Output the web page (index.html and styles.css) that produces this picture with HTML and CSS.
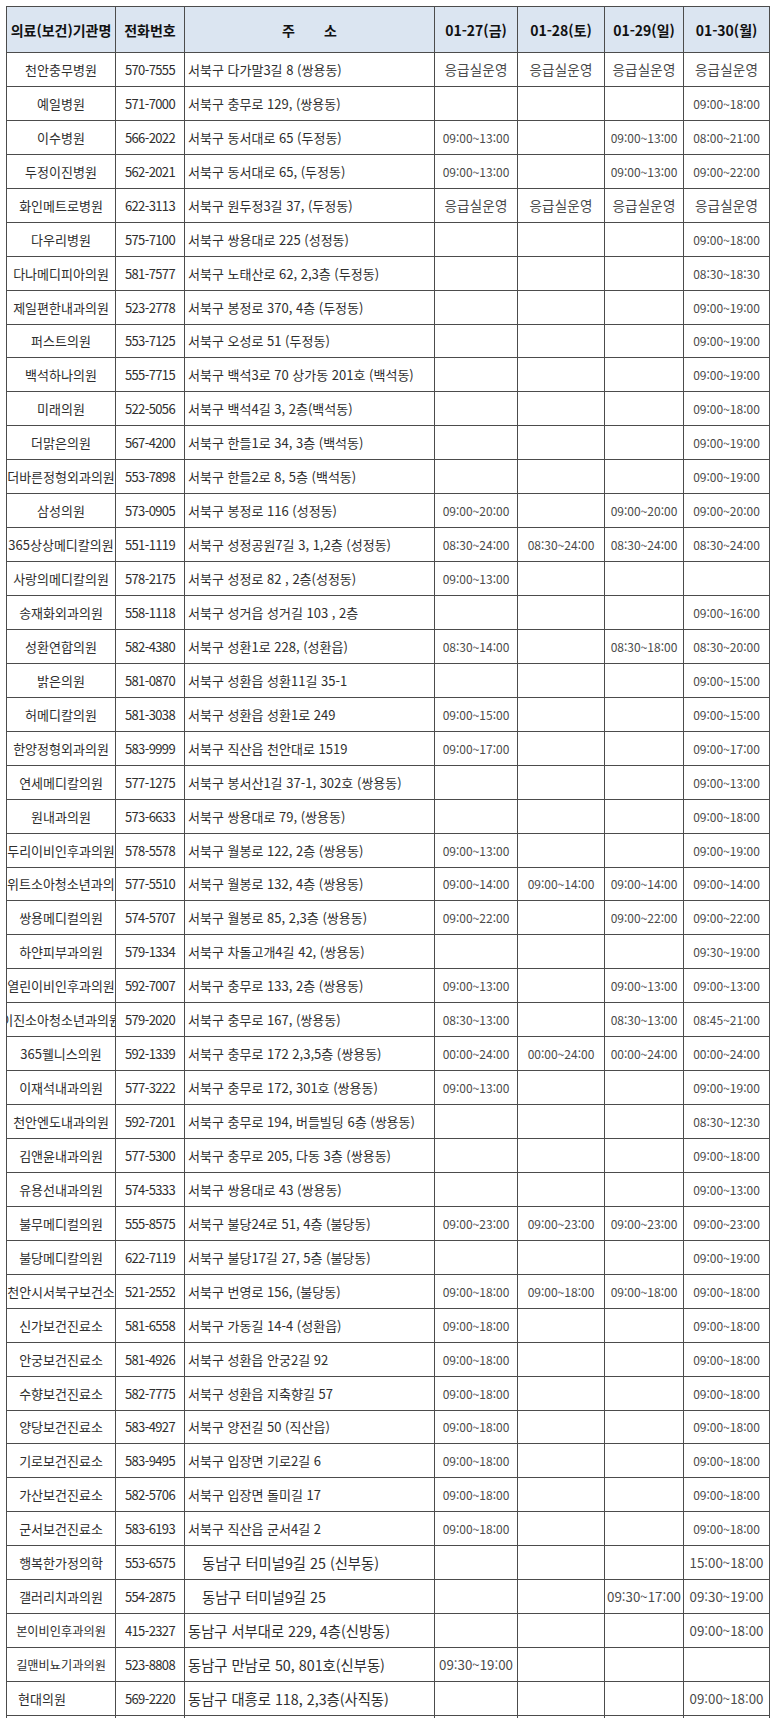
FILE: index.html
```html
<!DOCTYPE html>
<html lang="ko">
<head>
<meta charset="utf-8">
<title>설 연휴 의료기관 운영 현황</title>
<link rel="stylesheet" href="styles.css">
</head>
<body>
<table class="sched">
<colgroup>
<col class="c-name"><col class="c-phone"><col class="c-addr"><col class="c-day"><col class="c-day2"><col class="c-day3"><col class="c-day4">
</colgroup>
<thead>
<tr class="head">
<th class="h-name">의료(보건)기관명</th>
<th class="h-phone">전화번호</th>
<th class="h-addr"><span class="spread"><span>주</span><span>소</span></span></th>
<th class="h-date">01-27(금)</th>
<th class="h-date">01-28(토)</th>
<th class="h-date">01-29(일)</th>
<th class="h-date">01-30(월)</th>
</tr>
</thead>
<tbody>
<tr><td class="name"><div class="fit">천안충무병원</div></td><td class="phone">570-7555</td><td class="addr">서북구 다가말3길 8 (쌍용동)</td><td class="er">응급실운영</td><td class="er">응급실운영</td><td class="er">응급실운영</td><td class="er">응급실운영</td></tr>
<tr><td class="name"><div class="fit">예일병원</div></td><td class="phone">571-7000</td><td class="addr">서북구 충무로 129, (쌍용동)</td><td class="time"></td><td class="time"></td><td class="time"></td><td class="time">09:00~18:00</td></tr>
<tr><td class="name"><div class="fit">이수병원</div></td><td class="phone">566-2022</td><td class="addr">서북구 동서대로 65 (두정동)</td><td class="time">09:00~13:00</td><td class="time"></td><td class="time">09:00~13:00</td><td class="time">08:00~21:00</td></tr>
<tr><td class="name"><div class="fit">두정이진병원</div></td><td class="phone">562-2021</td><td class="addr">서북구 동서대로 65, (두정동)</td><td class="time">09:00~13:00</td><td class="time"></td><td class="time">09:00~13:00</td><td class="time">09:00~22:00</td></tr>
<tr><td class="name"><div class="fit">화인메트로병원</div></td><td class="phone">622-3113</td><td class="addr">서북구 원두정3길 37, (두정동)</td><td class="er">응급실운영</td><td class="er">응급실운영</td><td class="er">응급실운영</td><td class="er">응급실운영</td></tr>
<tr><td class="name"><div class="fit">다우리병원</div></td><td class="phone">575-7100</td><td class="addr">서북구 쌍용대로 225 (성정동)</td><td class="time"></td><td class="time"></td><td class="time"></td><td class="time">09:00~18:00</td></tr>
<tr><td class="name"><div class="fit">다나메디피아의원</div></td><td class="phone">581-7577</td><td class="addr">서북구 노태산로 62, 2,3층 (두정동)</td><td class="time"></td><td class="time"></td><td class="time"></td><td class="time">08:30~18:30</td></tr>
<tr><td class="name"><div class="fit">제일편한내과의원</div></td><td class="phone">523-2778</td><td class="addr">서북구 봉정로 370, 4층 (두정동)</td><td class="time"></td><td class="time"></td><td class="time"></td><td class="time">09:00~19:00</td></tr>
<tr><td class="name"><div class="fit">퍼스트의원</div></td><td class="phone">553-7125</td><td class="addr">서북구 오성로 51 (두정동)</td><td class="time"></td><td class="time"></td><td class="time"></td><td class="time">09:00~19:00</td></tr>
<tr><td class="name"><div class="fit">백석하나의원</div></td><td class="phone">555-7715</td><td class="addr">서북구 백석3로 70 상가동 201호 (백석동)</td><td class="time"></td><td class="time"></td><td class="time"></td><td class="time">09:00~19:00</td></tr>
<tr><td class="name"><div class="fit">미래의원</div></td><td class="phone">522-5056</td><td class="addr">서북구 백석4길 3, 2층(백석동)</td><td class="time"></td><td class="time"></td><td class="time"></td><td class="time">09:00~18:00</td></tr>
<tr><td class="name"><div class="fit">더맑은의원</div></td><td class="phone">567-4200</td><td class="addr">서북구 한들1로 34, 3층 (백석동)</td><td class="time"></td><td class="time"></td><td class="time"></td><td class="time">09:00~19:00</td></tr>
<tr><td class="name"><div class="fit">더바른정형외과의원</div></td><td class="phone">553-7898</td><td class="addr">서북구 한들2로 8, 5층 (백석동)</td><td class="time"></td><td class="time"></td><td class="time"></td><td class="time">09:00~19:00</td></tr>
<tr><td class="name"><div class="fit">삼성의원</div></td><td class="phone">573-0905</td><td class="addr">서북구 봉정로 116 (성정동)</td><td class="time">09:00~20:00</td><td class="time"></td><td class="time">09:00~20:00</td><td class="time">09:00~20:00</td></tr>
<tr><td class="name"><div class="fit">365상상메디칼의원</div></td><td class="phone">551-1119</td><td class="addr">서북구 성정공원7길 3, 1,2층 (성정동)</td><td class="time">08:30~24:00</td><td class="time">08:30~24:00</td><td class="time">08:30~24:00</td><td class="time">08:30~24:00</td></tr>
<tr><td class="name"><div class="fit">사랑의메디칼의원</div></td><td class="phone">578-2175</td><td class="addr">서북구 성정로 82 , 2층(성정동)</td><td class="time">09:00~13:00</td><td class="time"></td><td class="time"></td><td class="time"></td></tr>
<tr><td class="name"><div class="fit">송재화외과의원</div></td><td class="phone">558-1118</td><td class="addr">서북구 성거읍 성거길 103 , 2층</td><td class="time"></td><td class="time"></td><td class="time"></td><td class="time">09:00~16:00</td></tr>
<tr><td class="name"><div class="fit">성환연합의원</div></td><td class="phone">582-4380</td><td class="addr">서북구 성환1로 228, (성환읍)</td><td class="time">08:30~14:00</td><td class="time"></td><td class="time">08:30~18:00</td><td class="time">08:30~20:00</td></tr>
<tr><td class="name"><div class="fit">밝은의원</div></td><td class="phone">581-0870</td><td class="addr">서북구 성환읍 성환11길 35-1</td><td class="time"></td><td class="time"></td><td class="time"></td><td class="time">09:00~15:00</td></tr>
<tr><td class="name"><div class="fit">허메디칼의원</div></td><td class="phone">581-3038</td><td class="addr">서북구 성환읍 성환1로 249</td><td class="time">09:00~15:00</td><td class="time"></td><td class="time"></td><td class="time">09:00~15:00</td></tr>
<tr><td class="name"><div class="fit">한양정형외과의원</div></td><td class="phone">583-9999</td><td class="addr">서북구 직산읍 천안대로 1519</td><td class="time">09:00~17:00</td><td class="time"></td><td class="time"></td><td class="time">09:00~17:00</td></tr>
<tr><td class="name"><div class="fit">연세메디칼의원</div></td><td class="phone">577-1275</td><td class="addr">서북구 봉서산1길 37-1, 302호 (쌍용동)</td><td class="time"></td><td class="time"></td><td class="time"></td><td class="time">09:00~13:00</td></tr>
<tr><td class="name"><div class="fit">원내과의원</div></td><td class="phone">573-6633</td><td class="addr">서북구 쌍용대로 79, (쌍용동)</td><td class="time"></td><td class="time"></td><td class="time"></td><td class="time">09:00~18:00</td></tr>
<tr><td class="name"><div class="fit">두리이비인후과의원</div></td><td class="phone">578-5578</td><td class="addr">서북구 월봉로 122, 2층 (쌍용동)</td><td class="time">09:00~13:00</td><td class="time"></td><td class="time"></td><td class="time">09:00~19:00</td></tr>
<tr><td class="name"><div class="fit start">위트소아청소년과의원</div></td><td class="phone">577-5510</td><td class="addr">서북구 월봉로 132, 4층 (쌍용동)</td><td class="time">09:00~14:00</td><td class="time">09:00~14:00</td><td class="time">09:00~14:00</td><td class="time">09:00~14:00</td></tr>
<tr><td class="name"><div class="fit">쌍용메디컬의원</div></td><td class="phone">574-5707</td><td class="addr">서북구 월봉로 85, 2,3층 (쌍용동)</td><td class="time">09:00~22:00</td><td class="time"></td><td class="time">09:00~22:00</td><td class="time">09:00~22:00</td></tr>
<tr><td class="name"><div class="fit">하얀피부과의원</div></td><td class="phone">579-1334</td><td class="addr">서북구 차돌고개4길 42, (쌍용동)</td><td class="time"></td><td class="time"></td><td class="time"></td><td class="time">09:30~19:00</td></tr>
<tr><td class="name"><div class="fit">열린이비인후과의원</div></td><td class="phone">592-7007</td><td class="addr">서북구 충무로 133, 2층 (쌍용동)</td><td class="time">09:00~13:00</td><td class="time"></td><td class="time">09:00~13:00</td><td class="time">09:00~13:00</td></tr>
<tr><td class="name"><div class="fit">이진소아청소년과의원</div></td><td class="phone">579-2020</td><td class="addr">서북구 충무로 167, (쌍용동)</td><td class="time">08:30~13:00</td><td class="time"></td><td class="time">08:30~13:00</td><td class="time">08:45~21:00</td></tr>
<tr><td class="name"><div class="fit">365웰니스의원</div></td><td class="phone">592-1339</td><td class="addr">서북구 충무로 172 2,3,5층 (쌍용동)</td><td class="time">00:00~24:00</td><td class="time">00:00~24:00</td><td class="time">00:00~24:00</td><td class="time">00:00~24:00</td></tr>
<tr><td class="name"><div class="fit">이재석내과의원</div></td><td class="phone">577-3222</td><td class="addr">서북구 충무로 172, 301호 (쌍용동)</td><td class="time">09:00~13:00</td><td class="time"></td><td class="time"></td><td class="time">09:00~19:00</td></tr>
<tr><td class="name"><div class="fit">천안엔도내과의원</div></td><td class="phone">592-7201</td><td class="addr">서북구 충무로 194, 버들빌딩 6층 (쌍용동)</td><td class="time"></td><td class="time"></td><td class="time"></td><td class="time">08:30~12:30</td></tr>
<tr><td class="name"><div class="fit">김앤윤내과의원</div></td><td class="phone">577-5300</td><td class="addr">서북구 충무로 205, 다동 3층 (쌍용동)</td><td class="time"></td><td class="time"></td><td class="time"></td><td class="time">09:00~18:00</td></tr>
<tr><td class="name"><div class="fit">유용선내과의원</div></td><td class="phone">574-5333</td><td class="addr">서북구 쌍용대로 43 (쌍용동)</td><td class="time"></td><td class="time"></td><td class="time"></td><td class="time">09:00~13:00</td></tr>
<tr><td class="name"><div class="fit">불무메디컬의원</div></td><td class="phone">555-8575</td><td class="addr">서북구 불당24로 51, 4층 (불당동)</td><td class="time">09:00~23:00</td><td class="time">09:00~23:00</td><td class="time">09:00~23:00</td><td class="time">09:00~23:00</td></tr>
<tr><td class="name"><div class="fit">불당메디칼의원</div></td><td class="phone">622-7119</td><td class="addr">서북구 불당17길 27, 5층 (불당동)</td><td class="time"></td><td class="time"></td><td class="time"></td><td class="time">09:00~19:00</td></tr>
<tr><td class="name"><div class="fit">천안시서북구보건소</div></td><td class="phone">521-2552</td><td class="addr">서북구 번영로 156, (불당동)</td><td class="time">09:00~18:00</td><td class="time">09:00~18:00</td><td class="time">09:00~18:00</td><td class="time">09:00~18:00</td></tr>
<tr><td class="name"><div class="fit">신가보건진료소</div></td><td class="phone">581-6558</td><td class="addr">서북구 가동길 14-4 (성환읍)</td><td class="time">09:00~18:00</td><td class="time"></td><td class="time"></td><td class="time">09:00~18:00</td></tr>
<tr><td class="name"><div class="fit">안궁보건진료소</div></td><td class="phone">581-4926</td><td class="addr">서북구 성환읍 안궁2길 92</td><td class="time">09:00~18:00</td><td class="time"></td><td class="time"></td><td class="time">09:00~18:00</td></tr>
<tr><td class="name"><div class="fit">수향보건진료소</div></td><td class="phone">582-7775</td><td class="addr">서북구 성환읍 지축향길 57</td><td class="time">09:00~18:00</td><td class="time"></td><td class="time"></td><td class="time">09:00~18:00</td></tr>
<tr><td class="name"><div class="fit">양당보건진료소</div></td><td class="phone">583-4927</td><td class="addr">서북구 양전길 50 (직산읍)</td><td class="time">09:00~18:00</td><td class="time"></td><td class="time"></td><td class="time">09:00~18:00</td></tr>
<tr><td class="name"><div class="fit">기로보건진료소</div></td><td class="phone">583-9495</td><td class="addr">서북구 입장면 기로2길 6</td><td class="time">09:00~18:00</td><td class="time"></td><td class="time"></td><td class="time">09:00~18:00</td></tr>
<tr><td class="name"><div class="fit">가산보건진료소</div></td><td class="phone">582-5706</td><td class="addr">서북구 입장면 돌미길 17</td><td class="time">09:00~18:00</td><td class="time"></td><td class="time"></td><td class="time">09:00~18:00</td></tr>
<tr><td class="name"><div class="fit">군서보건진료소</div></td><td class="phone">583-6193</td><td class="addr">서북구 직산읍 군서4길 2</td><td class="time">09:00~18:00</td><td class="time"></td><td class="time"></td><td class="time">09:00~18:00</td></tr>
<tr class="big"><td class="name"><div class="fit">행복한가정의학</div></td><td class="phone">553-6575</td><td class="addr indent">동남구 터미널9길 25 (신부동)</td><td class="time"></td><td class="time"></td><td class="time"></td><td class="time">15:00~18:00</td></tr>
<tr class="big"><td class="name"><div class="fit">갤러리치과의원</div></td><td class="phone">554-2875</td><td class="addr indent">동남구 터미널9길 25</td><td class="time"></td><td class="time"></td><td class="time">09:30~17:00</td><td class="time">09:30~19:00</td></tr>
<tr class="big"><td class="name small"><div class="fit">본이비인후과의원</div></td><td class="phone">415-2327</td><td class="addr">동남구 서부대로 229, 4층(신방동)</td><td class="time"></td><td class="time"></td><td class="time"></td><td class="time">09:00~18:00</td></tr>
<tr class="big"><td class="name small"><div class="fit">길맨비뇨기과의원</div></td><td class="phone">523-8808</td><td class="addr">동남구 만남로 50, 801호(신부동)</td><td class="time">09:30~19:00</td><td class="time"></td><td class="time"></td><td class="time"></td></tr>
<tr class="big"><td class="name"><div class="fit start padded">현대의원</div></td><td class="phone">569-2220</td><td class="addr">동남구 대흥로 118, 2,3층(사직동)</td><td class="time"></td><td class="time"></td><td class="time"></td><td class="time">09:00~18:00</td></tr>
<tr class="big"><td class="name"></td><td class="phone"></td><td class="addr"></td><td class="time"></td><td class="time"></td><td class="time"></td><td class="time"></td></tr>
</tbody>
</table>
</body>
</html>
```
FILE: styles.css
```css
html, body {
  margin: 0;
  padding: 0;
  background: #ffffff;
}

body {
  padding: 6px 0 0 6px;
  font-family: "Noto Sans CJK KR", "Noto Sans", sans-serif;
  color: #2e2e2e;
}

.sched {
  border-collapse: collapse;
  table-layout: fixed;
  width: 764px;
}

.c-name { width: 109px; }
.c-phone { width: 69px; }
.c-addr { width: 250px; }
.c-day { width: 83px; }
.c-day2 { width: 87px; }
.c-day3 { width: 79px; }
.c-day4 { width: 86px; }

.sched th,
.sched td {
  border: 1px solid #4c4c4c;
  padding: 0;
  white-space: nowrap;
  overflow: hidden;
  vertical-align: middle;
}

.head {
  height: 46px;
}

.head th {
  background: #dbe5f1;
  color: #111111;
  font-weight: 700;
  text-align: center;
  font-size: 14px;
}

.spread {
  display: inline-flex;
  gap: 29px;
}

.sched tbody tr {
  height: 33.94px;
}

.name {
  font-size: 13px;
}

.fit {
  display: flex;
  justify-content: center;
  overflow: hidden;
  white-space: nowrap;
}

.fit.start {
  justify-content: flex-start;
}

.fit.padded {
  padding-left: 11px;
}

.name.small {
  font-size: 12.2px;
}

.phone {
  text-align: center;
  font-size: 13px;
  letter-spacing: -0.6px;
}

.addr {
  text-align: left;
  padding-left: 3px !important;
  font-size: 13px;
}

.addr.indent {
  padding-left: 17px !important;
}

.time {
  text-align: center;
  font-size: 12px;
  color: #4a4a4a;
}

.er {
  text-align: center;
  font-size: 13.5px;
  letter-spacing: 0.2px;
  color: #4a4a4a;
}

.big .addr {
  font-size: 14.3px;
}

.big .time {
  font-size: 13.3px;
}
```
